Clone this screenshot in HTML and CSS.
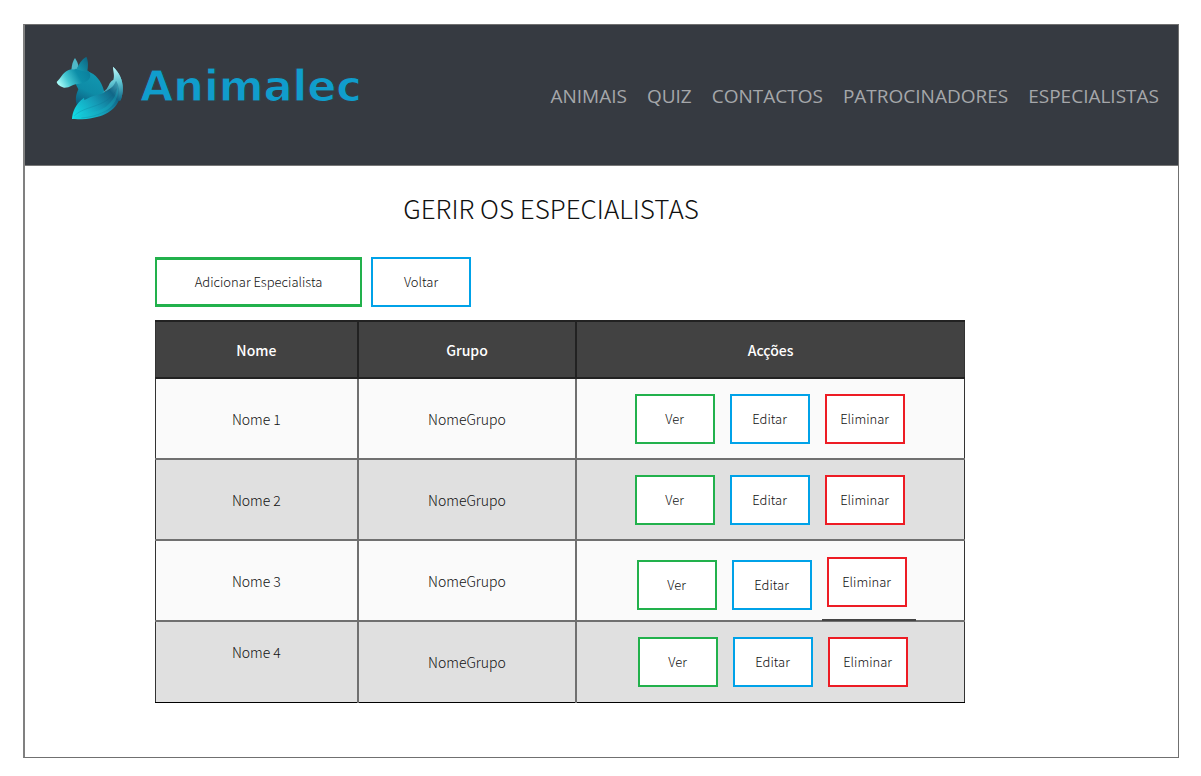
FILE: index.html
```html
<!DOCTYPE html>
<html lang="pt">
<head>
<meta charset="utf-8">
<meta name="viewport" content="width=device-width, initial-scale=1">
<title>Animalec - Gerir os Especialistas</title>
<link rel="stylesheet" href="styles.css">
</head>
<body>
<div class="page">
  <header class="header">
    <a class="brand" href="#">
      <svg class="brand-logo" viewBox="34 18 204 192" aria-hidden="true">
        <defs>
          <linearGradient id="head" x1="0" y1="0.65" x2="1" y2="0.3">
            <stop offset="0" stop-color="#a8fbf8"/><stop offset="0.3" stop-color="#45c8d2"/><stop offset="0.65" stop-color="#0d8ea8"/><stop offset="1" stop-color="#0b7f9c"/>
          </linearGradient>
          <linearGradient id="ear" x1="0" y1="1" x2="1" y2="0">
            <stop offset="0" stop-color="#15a3b8"/><stop offset="1" stop-color="#0d5f7d"/>
          </linearGradient>
          <linearGradient id="chest" x1="0.6" y1="0" x2="0.2" y2="1">
            <stop offset="0" stop-color="#1399b2"/><stop offset="0.6" stop-color="#0e8ba6"/><stop offset="1" stop-color="#0c5c7d"/>
          </linearGradient>
          <linearGradient id="tail" x1="0" y1="1" x2="1" y2="0.1">
            <stop offset="0" stop-color="#12e4ec"/><stop offset="0.4" stop-color="#159db8"/><stop offset="0.68" stop-color="#116788"/><stop offset="1" stop-color="#74d5df"/>
          </linearGradient>
          <linearGradient id="tip" x1="0.3" y1="0" x2="0.4" y2="1">
            <stop offset="0" stop-color="#c8ffff"/><stop offset="0.5" stop-color="#5fc4d2"/><stop offset="1" stop-color="#126d8d"/>
          </linearGradient>
        </defs>
        <path fill="#50b9c8" d="M80 60 Q82 36 91 24 Q99 36 101 46 L98 62Z"/>
        <path fill="url(#chest)" d="M92 56 L128 64 C154 72 170 94 178 122 L186 134 L112 166 L96 164 C92 148 93 136 101 118 L94 104Z"/>
        <path fill="url(#head)" d="M36 96 C50 84 56 62 80 58 Q98 60 112 52 L132 64 C146 84 128 98 104 101 C84 100 77 114 58 113 C48 109 39 106 36 96Z"/>
        <path fill="url(#ear)" d="M95 58 C103 42 111 28 125 20 C130 29 132 46 127 66 Q112 63 95 58Z"/>
        <path fill="url(#tail)" d="M82 207 C83 186 92 162 118 143 L119 150 L126 147 C154 130 174 136 186 122 L191 121 C212 108 210 72 205 50 C233 76 242 112 228 151 L222 152 C207 187 165 211 82 207Z"/>
        <path fill="url(#tip)" d="M205 50 C233 76 242 112 228 151 L222 152 C228 120 220 100 214 92 C207 112 190 122 173 128 L186 117 C194 106 195 94 206 90 C210 76 206 66 205 50Z"/>
        <path fill="#18b9ca" opacity="0.3" d="M82 207 C107 184 151 193 184 170 C204 154 217 134 219 106 C230 158 178 212 82 207Z"/>
        <path fill="none" stroke="#0e6685" stroke-width="2" opacity="0.35" d="M88 199 C119 164 188 176 216 116 M110 204 C162 201 201 176 222 152"/>
      </svg>
      <span class="brand-name">Animalec</span>
    </a>
    <nav class="nav" aria-label="Principal">
      <a href="#">ANIMAIS</a>
      <a href="#">QUIZ</a>
      <a href="#">CONTACTOS</a>
      <a href="#">PATROCINADORES</a>
      <a href="#">ESPECIALISTAS</a>
    </nav>
  </header>
  <main class="content">
    <h1 class="title">GERIR OS ESPECIALISTAS</h1>
    <div class="toolbar">
      <button type="button" class="btn btn-green btn-add">Adicionar Especialista</button>
      <button type="button" class="btn btn-blue btn-back">Voltar</button>
    </div>
    <table class="table">
      <colgroup><col class="col-name"><col class="col-group"><col class="col-actions"></colgroup>
      <thead>
        <tr><th scope="col">Nome</th><th scope="col">Grupo</th><th scope="col">Acções</th></tr>
      </thead>
      <tbody>
        <tr>
          <td>Nome 1</td><td>NomeGrupo</td>
          <td><div class="actions"><button type="button" class="btn btn-green">Ver</button><button type="button" class="btn btn-blue">Editar</button><button type="button" class="btn btn-red">Eliminar</button></div></td>
        </tr>
        <tr>
          <td>Nome 2</td><td>NomeGrupo</td>
          <td><div class="actions"><button type="button" class="btn btn-green">Ver</button><button type="button" class="btn btn-blue">Editar</button><button type="button" class="btn btn-red">Eliminar</button></div></td>
        </tr>
        <tr>
          <td>Nome 3</td><td>NomeGrupo</td>
          <td class="cell-marked"><div class="actions actions-low"><button type="button" class="btn btn-green">Ver</button><button type="button" class="btn btn-blue">Editar</button><button type="button" class="btn btn-red">Eliminar</button></div></td>
        </tr>
        <tr>
          <td class="cell-raised">Nome 4</td><td>NomeGrupo</td>
          <td><div class="actions actions-right"><button type="button" class="btn btn-green">Ver</button><button type="button" class="btn btn-blue">Editar</button><button type="button" class="btn btn-red">Eliminar</button></div></td>
        </tr>
      </tbody>
    </table>
  </main>
</div>
</body>
</html>
```
FILE: styles.css
```css
* { box-sizing: border-box; }

body {
  margin: 0;
  padding: 24px 22px 18px 23px;
  min-height: 100vh;
  display: flex;
  background: #fff;
  color: #111;
  font-family: "Noto Sans CJK SC", "Open Sans", sans-serif;
  font-size: 14px;
  line-height: 20px;
}

.page {
  flex: 1;
  border: 1px solid #707070;
  border-left-width: 2px;
  border-left-color: #808080;
}

.header {
  display: flex;
  justify-content: space-between;
  align-items: flex-start;
  min-height: 141px;
  padding: 31px 19px 0 31px;
  background: #363a41;
  border-bottom: 1px solid #777;
}

.brand {
  display: flex;
  align-items: flex-start;
  gap: 16px;
  text-decoration: none;
}

.brand-logo { width: 68px; height: 64px; }

/* The outline in the header colour slims the bold letters. */
.brand-name {
  font-family: "DejaVu Sans", sans-serif;
  font-size: 43px;
  font-weight: 700;
  line-height: 60px;
  color: #109dcc;
  -webkit-text-stroke: 1px #363a41;
}

.nav {
  display: flex;
  gap: 20px;
  padding-top: 26px;
  font-family: "Open Sans", sans-serif;
  font-size: 19px;
  line-height: 28px;
}

.nav a { color: #a5a7aa; text-decoration: none; }

.content { padding: 24px 213px 52px 130px; }

.title {
  margin: 0 0 31px;
  padding-right: 18px;
  font-size: 26px;
  line-height: 36px;
  font-weight: 300;
  text-align: center;
}

.toolbar {
  display: flex;
  gap: 9px;
  margin-bottom: 13px;
}

.btn {
  width: 80px;
  height: 50px;
  padding: 0;
  border: 2px solid;
  background: #fff;
  color: #111;
  font-family: inherit;
  font-size: 13px;
  font-weight: 300;
  line-height: 20px;
}

.btn-green { border-color: #22b14c; }
.btn-blue { border-color: #00a2e8; }
.btn-red { border-color: #ed1c24; }
.btn-add { width: 207px; border-width: 3px 2px; }
.btn-back { width: 100px; }

.table {
  width: 100%;
  table-layout: fixed;
  border-collapse: collapse;
  border: 1px solid #222;
  text-align: center;
}

.col-name { width: 25%; }
.col-group { width: 27%; }
.col-actions { width: 48%; }

.table th {
  height: 57px;
  padding: 0;
  border: 2px solid #222;
  background: #424242;
  color: #fff;
  font-weight: 500;
}

.table td {
  height: 81px;
  padding: 0;
  border: 2px solid #707070;
  background: #fafafa;
  font-weight: 300;
}

.table th:first-child,
.table td:first-child { border-left: 1px solid #333; }
.table th:last-child,
.table td:last-child { border-right: 1px solid #333; }
.table tbody tr:nth-child(even) td { background: #e0e0e0; }
.table tbody tr:last-child td { border-bottom: 1px solid #000; }
.table .cell-raised { padding-bottom: 20px; }

.actions {
  display: flex;
  justify-content: center;
  gap: 15px;
  padding-right: 2px;
}

.actions-low {
  align-items: flex-end;
  height: 53px;
  padding-left: 4px;
  margin-top: 6px;
}

.actions-low .btn-red { align-self: flex-start; }
.actions-right { padding-left: 6px; }

.cell-marked { position: relative; }

.cell-marked::after {
  content: "";
  position: absolute;
  right: 48px;
  bottom: -1px;
  width: 94px;
  height: 2px;
  background: #444;
}
```
